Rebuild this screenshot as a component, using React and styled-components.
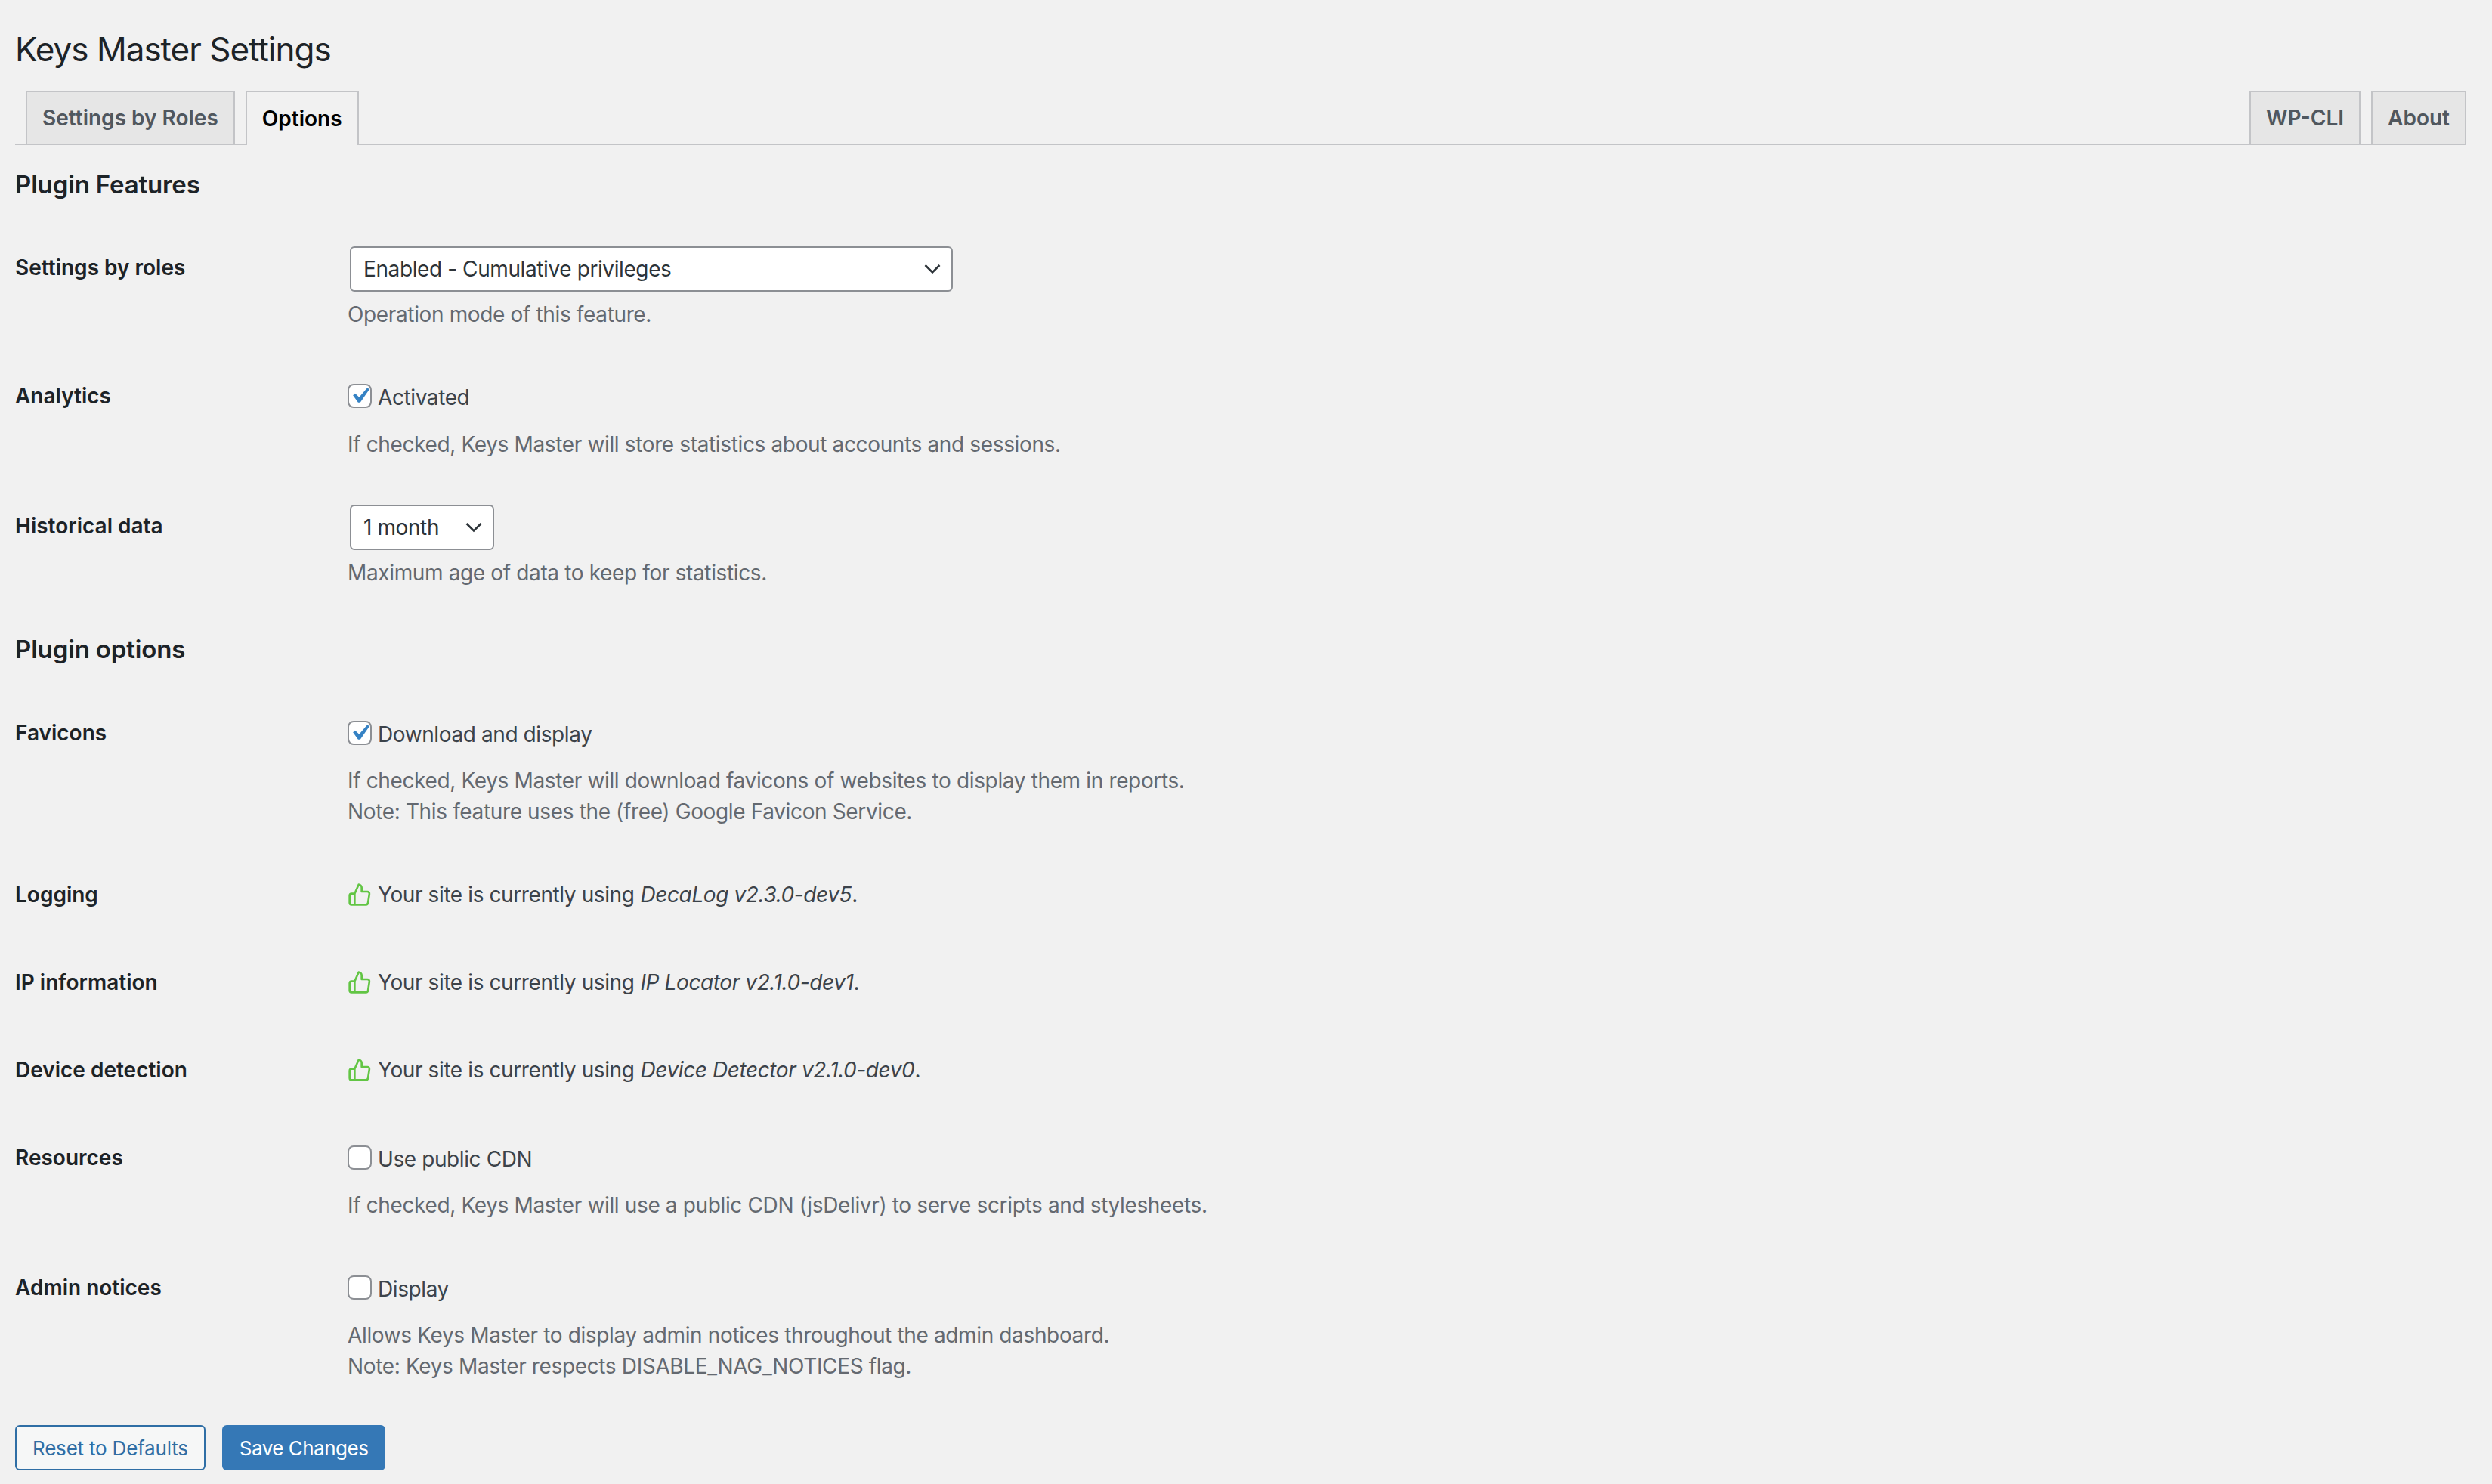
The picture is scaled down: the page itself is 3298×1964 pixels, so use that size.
import styled, { createGlobalStyle } from "styled-components";
import { FiThumbsUp } from "react-icons/fi";

const GlobalStyle = createGlobalStyle`
  html, body {
    margin: 0;
    background: #f1f1f1;
  }
  body {
    font-family: Inter, "Liberation Sans", sans-serif;
    font-size: 26px;
    color: #3c434a;
  }
`;

const Page = styled.div`
  min-height: 1964px;
  box-sizing: border-box;
  padding: 36px 34px 0 20px;
`;

const Title = styled.h1`
  margin: 0;
  font-size: 44px;
  line-height: 58px;
  font-weight: 400;
  letter-spacing: -1px;
  color: #1d2327;
`;

const TabBar = styled.div`
  display: flex;
  gap: 14px;
  height: 72px;
  box-sizing: border-box;
  margin-top: 26px;
  padding-left: 14px;
  border-bottom: 2px solid #c3c4c7;
`;

const Tab = styled.div`
  box-sizing: border-box;
  height: 72px;
  padding: 0 20px;
  display: flex;
  align-items: center;
  border: 2px solid #c3c4c7;
  border-bottom-width: ${(p) => (p.$active ? "0" : "2px")};
  background: ${(p) => (p.$active ? "#f1f1f1" : "#e6e6e6")};
  color: ${(p) => (p.$active ? "#000" : "#50575e")};
  font-size: 28px;
  font-weight: 600;
`;

const TabSpacer = styled.div`
  flex: 1;
`;

const SectionTitle = styled.h2`
  margin: ${(p) => p.$top} 0 0;
  font-size: 33px;
  line-height: 44px;
  font-weight: 600;
  letter-spacing: -0.15px;
  color: #1d2327;
`;

const Row = styled.div`
  display: grid;
  grid-template-columns: 440px 1fr;
  margin-top: ${(p) => p.$top};
`;

const RowLabel = styled.div`
  padding-top: ${(p) => (p.$tall ? "7px" : "0")};
  font-size: 28px;
  line-height: 42px;
  font-weight: 600;
  color: #1d2327;
`;

const Field = styled.div`
  min-width: 0;
`;

const Select = styled.div`
  box-sizing: border-box;
  width: ${(p) => p.$width};
  height: 60px;
  margin-left: 3px;
  padding: 0 14px 0 16px;
  display: flex;
  align-items: center;
  justify-content: space-between;
  background: #fff;
  border: 2px solid #8c8f94;
  border-radius: 6px;
  font-size: 28px;
  letter-spacing: -0.4px;
  color: #2c3338;
`;

const Description = styled.p`
  margin: ${(p) => p.$top || "10px"} 0 0;
  font-size: 28px;
  line-height: 41px;
  letter-spacing: -0.36px;
  color: #646970;
`;

const Line = styled.div`
  display: flex;
  align-items: center;
  gap: 8px;
  height: 42px;
  font-size: 28px;
  letter-spacing: -0.4px;
  color: #3c434a;

  em {
    color: #3c434a;
    margin-left: 8px;
  }

  svg.thumb {
    width: 32px;
    height: 32px;
    color: #62c544;
    stroke-width: 2;
    flex: none;
  }
`;

const CheckLine = styled(Line)`
  box-sizing: border-box;
  padding-top: 3px;
`;

const CheckBox = styled.span`
  box-sizing: border-box;
  width: 32px;
  height: 32px;
  margin-top: -3px;
  flex: none;
  display: block;
  background: #fff;
  border: 2px solid #8c8f94;
  border-radius: 8px;

  svg {
    display: block;
    width: 42px;
    height: 42px;
    margin: -7px;
  }
`;

const Actions = styled.div`
  display: flex;
  gap: 22px;
  margin-top: 57px;
`;

const Button = styled.button`
  box-sizing: border-box;
  height: 60px;
  padding: 0 21px;
  border: 2px solid #2f6ea5;
  border-radius: 6px;
  background: ${(p) => (p.$primary ? "#3578b6" : "#f6f7f7")};
  border-color: ${(p) => (p.$primary ? "#3578b6" : "#2f6ea5")};
  color: ${(p) => (p.$primary ? "#fff" : "#2f6ea5")};
  font-family: inherit;
  font-size: 26px;
  letter-spacing: ${(p) => (p.$primary ? "-0.5px" : "-0.2px")};
`;

const Chevron = () => (
  <svg width="22" height="14" viewBox="0 0 22 14" fill="none">
    <path d="M1.5 2l9.5 9.5L20.5 2" stroke="#2c3338" strokeWidth="2.6" />
  </svg>
);

const Check = ({ checked }) => (
  <CheckBox>
    {checked && (
      <svg viewBox="0 0 20 20">
        <path fill="#3582c4" d="M14.83 4.89l1.34.94-5.81 8.38H9.02L5.78 9.67l1.34-1.25 2.57 2.4z" />
      </svg>
    )}
  </CheckBox>
);

const Using = ({ name }) => (
  <Line>
    <FiThumbsUp className="thumb" />
    <span>
      Your site is currently using<em>{name}</em>.
    </span>
  </Line>
);

export default function App() {
  return (
    <Page>
      <GlobalStyle />
      <Title>Keys Master Settings</Title>
      <TabBar>
        <Tab>Settings by Roles</Tab>
        <Tab $active>Options</Tab>
        <TabSpacer />
        <Tab>WP-CLI</Tab>
        <Tab>About</Tab>
      </TabBar>

      <SectionTitle $top="30px">Plugin Features</SectionTitle>

      <Row $top="60px">
        <RowLabel $tall>Settings by roles</RowLabel>
        <Field>
          <Select $width="798px">
            Enabled - Cumulative privileges
            <Chevron />
          </Select>
          <Description>Operation mode of this feature.</Description>
        </Field>
      </Row>

      <Row $top="66px">
        <RowLabel>Analytics</RowLabel>
        <Field>
          <CheckLine>
            <Check checked />
            Activated
          </CheckLine>
          <Description $top="23px">
            If checked, Keys Master will store statistics about accounts and sessions.
          </Description>
        </Field>
      </Row>

      <Row $top="59px">
        <RowLabel $tall>Historical data</RowLabel>
        <Field>
          <Select $width="191px">
            1 month
            <Chevron />
          </Select>
          <Description>Maximum age of data to keep for statistics.</Description>
        </Field>
      </Row>

      <SectionTitle $top="58px">Plugin options</SectionTitle>

      <Row $top="68px">
        <RowLabel>Favicons</RowLabel>
        <Field>
          <CheckLine>
            <Check checked />
            Download and display
          </CheckLine>
          <Description $top="22px">
            If checked, Keys Master will download favicons of websites to display them in reports.
            <br />
            Note: This feature uses the (free) Google Favicon Service.
          </Description>
        </Field>
      </Row>

      <Row $top="68px">
        <RowLabel>Logging</RowLabel>
        <Field>
          <Using name="DecaLog v2.3.0-dev5" />
        </Field>
      </Row>

      <Row $top="74px">
        <RowLabel>IP information</RowLabel>
        <Field>
          <Using name="IP Locator v2.1.0-dev1" />
        </Field>
      </Row>

      <Row $top="74px">
        <RowLabel>Device detection</RowLabel>
        <Field>
          <Using name="Device Detector v2.1.0-dev0" />
        </Field>
      </Row>

      <Row $top="74px">
        <RowLabel>Resources</RowLabel>
        <Field>
          <CheckLine>
            <Check />
            Use public CDN
          </CheckLine>
          <Description $top="22px">
            If checked, Keys Master will use a public CDN (jsDelivr) to serve scripts and stylesheets.
          </Description>
        </Field>
      </Row>

      <Row $top="67px">
        <RowLabel>Admin notices</RowLabel>
        <Field>
          <CheckLine>
            <Check />
            Display
          </CheckLine>
          <Description $top="22px">
            Allows Keys Master to display admin notices throughout the admin dashboard.
            <br />
            Note: Keys Master respects DISABLE_NAG_NOTICES flag.
          </Description>
        </Field>
      </Row>

      <Actions>
        <Button>Reset to Defaults</Button>
        <Button $primary>Save Changes</Button>
      </Actions>
    </Page>
  );
}
